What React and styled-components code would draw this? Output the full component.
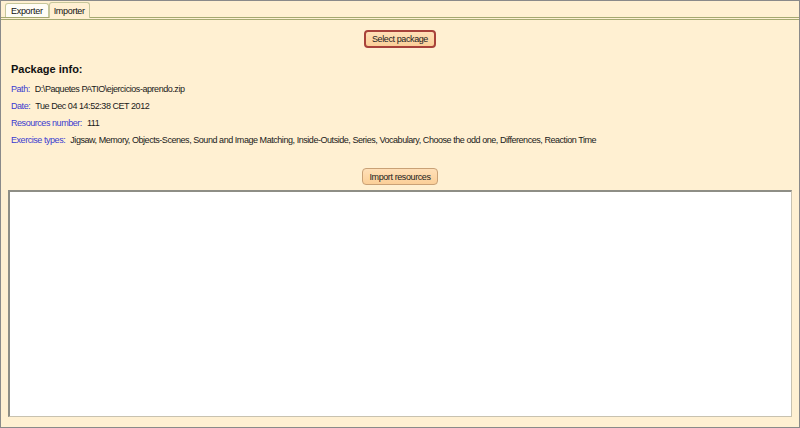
import React from "react";
import styled, { createGlobalStyle } from "styled-components";

const Global = createGlobalStyle`
  html, body { margin: 0; padding: 0; }
  body {
    width: 800px;
    height: 428px;
    overflow: hidden;
    font-family: "Liberation Sans", Arial, sans-serif;
    font-size: 9px;
    letter-spacing: -0.45px;
    color: #1a1a1a;
  }
`;

const Frame = styled.div`
  box-sizing: border-box;
  width: 800px;
  height: 428px;
  border: 1px solid #8a8a8a;
  background: #fff0d2;
  display: flex;
  flex-direction: column;
`;

const TabStrip = styled.div`
  display: flex;
  align-items: flex-end;
  height: 16px;
  padding-left: 4px;
  border-bottom: 3px double #a4a870;
`;

const Tab = styled.div`
  box-sizing: border-box;
  height: ${(p) => (p.active ? "16px" : "14px")};
  margin-bottom: ${(p) => (p.active ? "-1px" : "0")};
  padding: 0 ${(p) => (p.active ? "4px" : "5px")};
  display: flex;
  align-items: center;
  border: 1px solid #c6c69a;
  border-bottom: none;
  border-radius: 3px 3px 0 0;
  background: ${(p) => (p.active ? "#fff0d2" : "#fffdf6")};
  color: #111;
  letter-spacing: -0.3px;
  position: relative;
  z-index: ${(p) => (p.active ? 1 : 0)};
`;

const Body = styled.div`
  flex: 1;
  display: flex;
  flex-direction: column;
  padding: 0 7px 10px 7px;
`;

const ButtonRow = styled.div`
  display: flex;
  justify-content: center;
  margin-top: ${(p) => p.top}px;
`;

const Button = styled.button`
  box-sizing: border-box;
  font-family: "Liberation Sans", Arial, sans-serif;
  font-size: 9px;
  letter-spacing: -0.4px;
  color: #222;
  height: ${(p) => (p.focused ? "18px" : "17px")};
  width: ${(p) => p.w}px;
  padding: 0;
  background: linear-gradient(#ffe0b8, #fbcf98);
  border: ${(p) => (p.focused ? "2px solid #a8423a" : "1px solid #c9a176")};
  border-radius: 4px;
`;

const Title = styled.div`
  font-weight: bold;
  font-size: 11px;
  letter-spacing: 0;
  line-height: 13px;
  margin: 15px 0 0 3px;
  color: #111;
`;

const InfoList = styled.div`
  display: flex;
  flex-direction: column;
  gap: 4px;
  margin: 6px 0 0 3px;
`;

const InfoRow = styled.div`
  display: flex;
  align-items: center;
  height: 13px;
  color: #1a1a1a;
`;

const Label = styled.span`
  color: #3b3bd0;
  margin-right: 5px;
`;

const LogArea = styled.div`
  flex: 1;
  margin-top: 5px;
  background: #fff;
  border-top: 2px solid #8e8e86;
  border-left: 2px solid #8e8e86;
  border-right: 1px solid #c8c2b0;
  border-bottom: 1px solid #c8c2b0;
`;

const info = [
  ["Path:", "D:\\Paquetes PATIO\\ejercicios-aprendo.zip"],
  ["Date:", "Tue Dec 04 14:52:38 CET 2012"],
  ["Resources number:", "111"],
  [
    "Exercise types:",
    "Jigsaw, Memory, Objects-Scenes, Sound and Image Matching, Inside-Outside, Series, Vocabulary, Choose the odd one, Differences, Reaction Time",
  ],
];

export default function App() {
  return (
    <>
      <Global />
      <Frame>
        <TabStrip>
          <Tab>Exporter</Tab>
          <Tab active>Importer</Tab>
        </TabStrip>
        <Body>
          <ButtonRow top={10}>
            <Button focused w={72}>Select package</Button>
          </ButtonRow>
          <Title>Package info:</Title>
          <InfoList>
            {info.map(([k, v]) => (
              <InfoRow key={k}>
                <Label>{k}</Label>
                {v}
              </InfoRow>
            ))}
          </InfoList>
          <ButtonRow top={22}>
            <Button w={76}>Import resources</Button>
          </ButtonRow>
          <LogArea />
        </Body>
      </Frame>
    </>
  );
}
